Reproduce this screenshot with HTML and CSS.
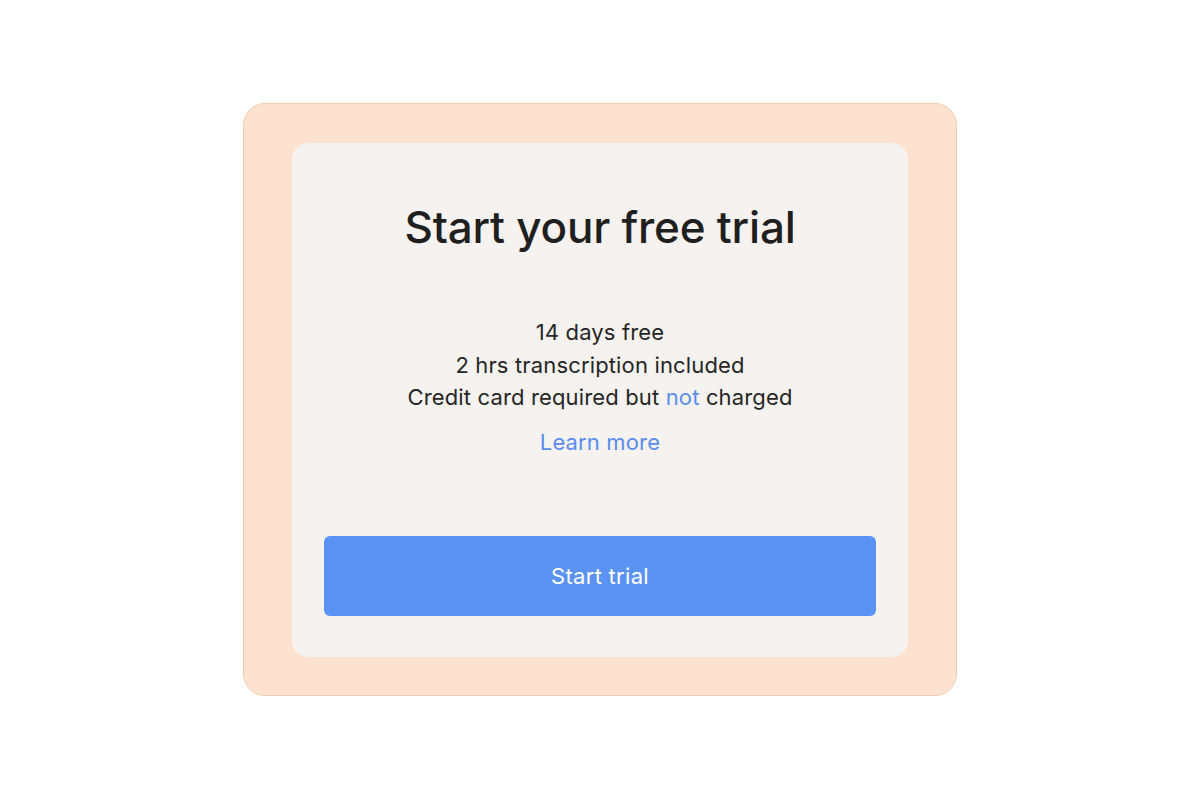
FILE: index.html
```html
<!DOCTYPE html>
<html lang="en">
<head>
    <meta charset="UTF-8">
    <meta name="viewport" content="width=device-width, initial-scale=1.0">
    <title>Start your free trial</title>
    <link rel="stylesheet" href="styles.css">
</head>
<body>
    <div class="page">
        <div class="frame">
            <div class="card">
                <h1 class="title">Start your free trial</h1>

                <ul class="perks">
                    <li>14 days free</li>
                    <li>2 hrs transcription included</li>
                    <li>Credit card required but <span class="accent">not</span> charged</li>
                </ul>

                <a class="learn" href="#">Learn more</a>

                <button class="btn">Start trial</button>
            </div>
        </div>
    </div>
</body>
</html>
```

FILE: styles.css
```css
html, body {
    margin: 0;
    padding: 0;
    background: #ffffff;
}

body {
    font-family: Inter, "Noto Sans", sans-serif;
    color: #222222;
}

.page {
    width: 1200px;
    height: 800px;
    box-sizing: border-box;
    padding-top: 103px;
    display: flex;
    justify-content: center;
    align-items: flex-start;
}

.frame {
    width: 714px;
    height: 593px;
    box-sizing: border-box;
    padding: 39px 48px 38px 48px;
    background: #fde3cf;
    border: 1px solid #f2cdb0;
    border-radius: 22px;
}

.card {
    height: 100%;
    box-sizing: border-box;
    padding: 59px 32px 41px;
    background: #f6f2ef;
    border-radius: 16px;
    display: flex;
    flex-direction: column;
    align-items: center;
}

.title {
    margin: 0;
    font-size: 44px;
    line-height: 50px;
    font-weight: 500;
    letter-spacing: -0.2px;
    color: #1f1f1f;
}

.perks {
    list-style: none;
    margin: 64px 0 0;
    padding: 0;
    text-align: center;
    font-size: 22px;
    line-height: 32.5px;
    letter-spacing: 0.15px;
    color: #262626;
}

.accent {
    color: #5b8def;
}

.learn {
    margin-top: 12px;
    font-size: 22px;
    line-height: 32px;
    letter-spacing: 0.15px;
    color: #5b8def;
    text-decoration: none;
}

.btn {
    margin-top: auto;
    width: 100%;
    height: 80px;
    border: none;
    border-radius: 6px;
    background: #5b93f5;
    color: #ffffff;
    font-family: inherit;
    font-size: 22px;
    letter-spacing: 0.3px;
    cursor: pointer;
}

.btn:hover {
    background: #4a84ea;
}
```
